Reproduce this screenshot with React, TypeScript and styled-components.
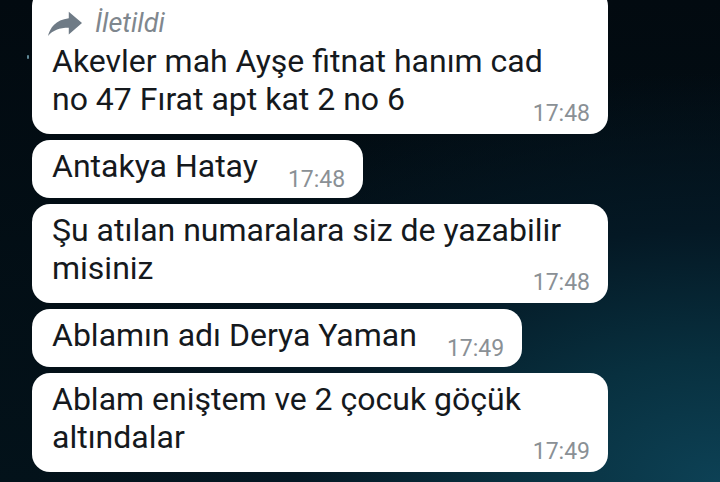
import React from 'react';
import styled, { createGlobalStyle } from 'styled-components';

type Message = {
  lines: string[];
  time: string;
  forwarded?: boolean;
};

const messages: Message[] = [
  { lines: ['Akevler mah Ayşe fitnat hanım cad', 'no 47 Fırat apt kat 2 no 6'], time: '17:48', forwarded: true },
  { lines: ['Antakya Hatay'], time: '17:48' },
  { lines: ['Şu atılan numaralara siz de yazabilir', 'misiniz'], time: '17:48' },
  { lines: ['Ablamın adı Derya Yaman'], time: '17:49' },
  { lines: ['Ablam eniştem ve 2 çocuk göçük', 'altındalar'], time: '17:49' },
];

const ForwardIcon = () => (
  <svg width="34" height="26" viewBox="3 4 18 16" preserveAspectRatio="none">
    <path
      transform="translate(24 0) scale(-1 1)"
      d="M10 9V5l-7 7 7 7v-4.1c5 0 8.5 1.6 11 5.1-1-5-4-10-11-11z"
      fill="#6f7b86"
    />
  </svg>
);

const App: React.FC = () => {
  return (
    <>
      <GlobalStyle />
      <Screen>
        <Speck />
        <List>
          {messages.map((m, i) => {
            const stacked = m.lines.length > 1;
            return (
              <Bubble key={i} $stacked={stacked}>
                {m.forwarded && (
                  <Forwarded>
                    <ForwardIcon />
                    <ForwardLabel>İletildi</ForwardLabel>
                  </Forwarded>
                )}
                <Text $stacked={stacked} $forwarded={!!m.forwarded}>
                  {m.lines.map((l, j) => (
                    <Line key={j}>{l}</Line>
                  ))}
                </Text>
                <Time $stacked={stacked}>{m.time}</Time>
              </Bubble>
            );
          })}
        </List>
      </Screen>
    </>
  );
};

const GlobalStyle = createGlobalStyle`
  html, body {
    margin: 0;
    padding: 0;
    background: #020b11;
    font-family: Roboto, "Noto Sans", "Liberation Sans", sans-serif;
  }
`;

const Screen = styled.div`
  position: relative;
  width: 100%;
  height: 100vh;
  overflow: hidden;
  background:
    radial-gradient(ellipse 95% 85% at 100% 100%, #0d4155 0%, #08303f 30%, #041824 62%, rgba(2, 11, 17, 0) 100%),
    linear-gradient(180deg, #020a10 0%, #03121a 100%);
`;

const Speck = styled.span`
  position: absolute;
  left: 27px;
  top: 55px;
  width: 2px;
  height: 4px;
  border-radius: 1px;
  background: #5f8896;
`;

const List = styled.div`
  display: flex;
  flex-direction: column;
  align-items: flex-start;
  gap: 6px;
  margin-top: -12px;
  padding-left: 32px;
`;

const Bubble = styled.div<{ $stacked: boolean }>`
  display: flex;
  flex-direction: ${(p) => (p.$stacked ? 'column' : 'row')};
  align-items: ${(p) => (p.$stacked ? 'stretch' : 'flex-end')};
  box-sizing: border-box;
  width: ${(p) => (p.$stacked ? '576px' : 'auto')};
  padding: 7px 18px ${(p) => (p.$stacked ? '8px' : '6px')} 20px;
  background: #ffffff;
  border-radius: 18px;
`;

const Forwarded = styled.div`
  display: flex;
  align-items: center;
  gap: 13px;
  height: 32px;
  margin: 12px 0 0 -4px;
`;

const ForwardLabel = styled.span`
  font-size: 27px;
  line-height: 30px;
  font-style: italic;
  color: #7f878e;
`;

const Text = styled.div<{ $stacked: boolean; $forwarded: boolean }>`
  font-size: 32px;
  line-height: 38px;
  color: #15191d;
  margin-top: ${(p) => (p.$forwarded ? '3px' : '0')};
  margin-bottom: ${(p) => (p.$stacked ? '0' : '7px')};
  white-space: nowrap;
`;

const Line = styled.div``;

const Time = styled.div<{ $stacked: boolean }>`
  align-self: flex-end;
  font-size: 23px;
  line-height: 24px;
  color: #8a9095;
  margin-top: ${(p) => (p.$stacked ? '-16px' : '0')};
  margin-left: ${(p) => (p.$stacked ? '0' : '30px')};
`;

export default App;
